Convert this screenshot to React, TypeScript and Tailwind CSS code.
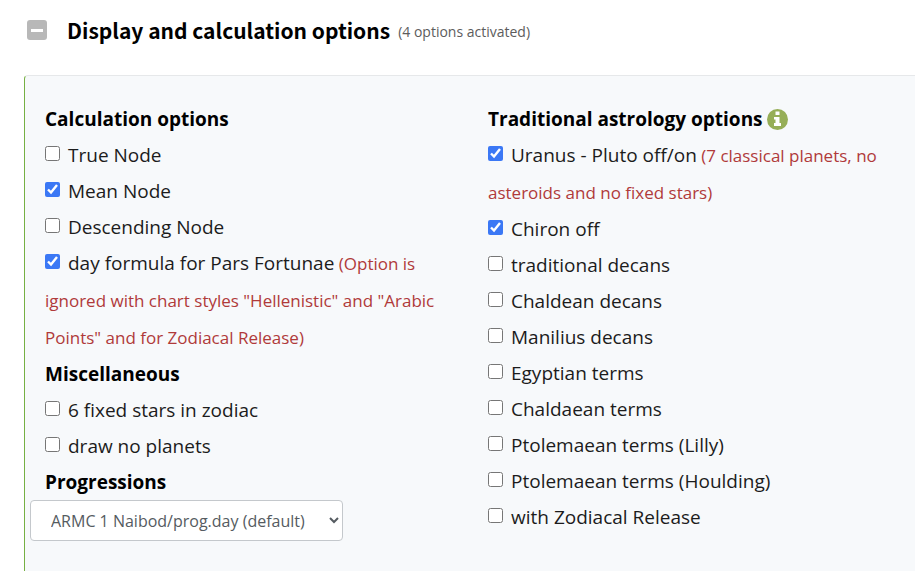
import type { ReactNode } from "react";

type Option = { id: string; label: string; checked?: boolean; note?: string };

const calculation: Option[] = [
  { id: "true-node", label: "True Node" },
  { id: "mean-node", label: "Mean Node", checked: true },
  { id: "desc-node", label: "Descending Node" },
  {
    id: "pars",
    label: "day formula for Pars Fortunae",
    checked: true,
    note: '(Option is ignored with chart styles "Hellenistic" and "Arabic Points" and for Zodiacal Release)',
  },
];

const misc: Option[] = [
  { id: "fixed-stars", label: "6 fixed stars in zodiac" },
  { id: "no-planets", label: "draw no planets" },
];

const traditional: Option[] = [
  { id: "uranus", label: "Uranus - Pluto off/on", checked: true, note: "(7 classical planets, no asteroids and no fixed stars)" },
  { id: "chiron", label: "Chiron off", checked: true },
  { id: "trad-decans", label: "traditional decans" },
  { id: "chald-decans", label: "Chaldean decans" },
  { id: "manilius", label: "Manilius decans" },
  { id: "egyptian", label: "Egyptian terms" },
  { id: "chald-terms", label: "Chaldaean terms" },
  { id: "lilly", label: "Ptolemaean terms (Lilly)" },
  { id: "houlding", label: "Ptolemaean terms (Houlding)" },
  { id: "release", label: "with Zodiacal Release" },
];

function Heading({ children }: { children: ReactNode }) {
  return <h3 className="flex h-9 items-center text-[19px] font-bold text-black">{children}</h3>;
}

function OptionRow({ id, label, checked, note }: Option) {
  return (
    <div className={note ? "leading-[37px]" : "leading-9"}>
      <input id={id} type="checkbox" defaultChecked={checked} className="mr-2 size-[15px] align-[1px] accent-[#3b78f5]" />
      <label htmlFor={id}>
        {label}
        {note && <span className="text-[17px] text-[#b03a3a]"> {note}</span>}
      </label>
    </div>
  );
}

export default function App() {
  return (
    <main className="flex min-h-screen flex-col bg-white pl-6 font-['Open_Sans','Noto_Sans',sans-serif] text-[19px] text-[#1c1c1c]">
      <header className="flex h-[75px] items-start pt-4">
        <button type="button" aria-label="Collapse options" className="mt-1 ml-[3px] flex size-5 items-center justify-center rounded-[3px] bg-[#b8b8b8]">
          <span className="h-[3px] w-3 bg-white" />
        </button>
        <h2 className="ml-5 font-['Noto_Sans_CJK_JP',sans-serif] text-[21px] leading-7 font-bold text-black">Display and calculation options</h2>
        <span className="ml-2 pt-1 text-[14px] leading-6 text-[#5c5c5c]">(4 options activated)</span>
      </header>
      <section className="grid flex-1 grid-cols-2 content-start gap-x-4 rounded-tl border-t border-l border-t-[#e6e8ea] border-l-[#76b043] bg-[#f7f9fb] pt-[25px] pl-5">
        <div>
          <Heading>Calculation options</Heading>
          {calculation.map((o) => <OptionRow key={o.id} {...o} />)}
          <Heading>Miscellaneous</Heading>
          {misc.map((o) => <OptionRow key={o.id} {...o} />)}
          <Heading><label htmlFor="progressions">Progressions</label></Heading>
          <select id="progressions" className="-ml-[15px] h-[41px] w-[313px] rounded border border-[#c4c8cc] bg-white px-4 text-[16px] text-[#555b61]">
            <option>ARMC 1 Naibod/prog.day (default)</option>
          </select>
        </div>
        <div>
          <Heading>
            Traditional astrology options
            <svg viewBox="0 0 21 21" className="ml-1 size-[21px]" aria-hidden="true">
              <circle cx="10.5" cy="10.5" r="10.5" fill="#96ae57" />
              <path d="M8.5 2.5h4v3.500h-4zM7 8h5.500v6H14v3H7v-3h1.500v-3.500H7z" fill="#fff" />
            </svg>
          </Heading>
          {traditional.map((o) => <OptionRow key={o.id} {...o} />)}
        </div>
      </section>
    </main>
  );
}
